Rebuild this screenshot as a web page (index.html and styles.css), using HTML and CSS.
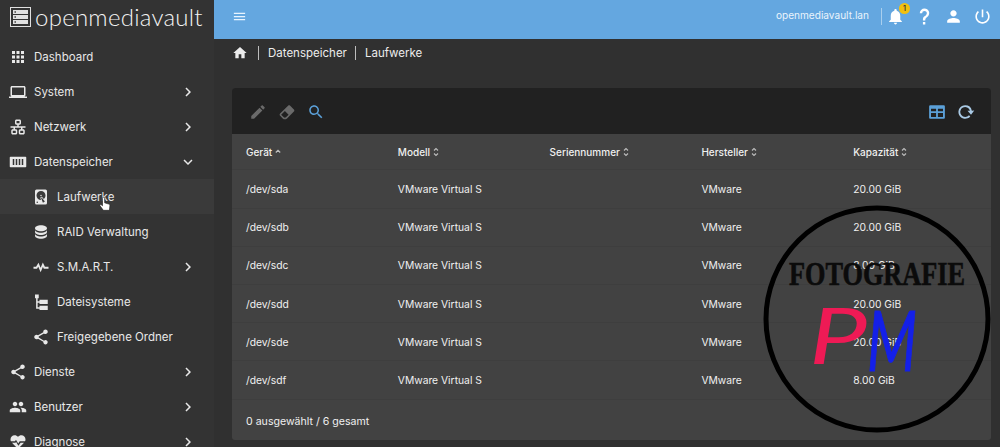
FILE: index.html
```html
<!DOCTYPE html>
<html lang="de">
<head>
<meta charset="utf-8">
<title>openmediavault</title>
<link rel="stylesheet" href="styles.css">
</head>
<body>
<svg class="defs" width="0" height="0">
  <symbol id="chev-r" viewBox="0 0 24 24"><path d="M8.6 16.6 13.2 12 8.6 7.4 10 6l6 6-6 6z"/></symbol>
  <symbol id="chev-d" viewBox="0 0 24 24"><path d="M7.4 8.6 12 13.2l4.6-4.6L18 10l-6 6-6-6z"/></symbol>
  <symbol id="apps" viewBox="0 0 24 24"><path d="M4 8h4V4H4v4zm6 12h4v-4h-4v4zm-6 0h4v-4H4v4zm0-6h4v-4H4v4zm6 0h4v-4h-4v4zm6-10v4h4V4h-4zm-6 4h4V4h-4v4zm6 6h4v-4h-4v4zm0 6h4v-4h-4v4z"/></symbol>
  <symbol id="laptop" viewBox="0 0 24 24"><path d="M20 18c1.1 0 2-.9 2-2V6c0-1.1-.9-2-2-2H4c-1.1 0-2 .9-2 2v10c0 1.1.9 2 2 2H0v2h24v-2h-4zM4 6h16v10H4V6z"/></symbol>
  <symbol id="lan" viewBox="0 0 24 24"><path d="M10,2C8.89,2 8,2.89 8,4V7C8,8.11 8.89,9 10,9H11V11H2V13H6V15H5C3.89,15 3,15.89 3,17V20C3,21.11 3.89,22 5,22H9C10.11,22 11,21.11 11,20V17C11,15.89 10.11,15 9,15H8V13H16V15H15C13.89,15 13,15.89 13,17V20C13,21.11 13.89,22 15,22H19C20.11,22 21,21.11 21,20V17C21,15.89 20.11,15 19,15H18V13H22V11H13V9H14C15.11,9 16,8.11 16,7V4C16,2.89 15.11,2 14,2H10M10,4H14V7H10V4M5,17H9V20H5V17M15,17H19V20H15V17Z"/></symbol>
  <symbol id="storage" viewBox="0 0 24 24"><path fill-rule="evenodd" d="M2 5h20a1 1 0 0 1 1 1v12a1 1 0 0 1-1 1H2a1 1 0 0 1-1-1V6a1 1 0 0 1 1-1zM5 8v8h2V8zm4 0v8h2V8zm4 0v8h2V8zm4 0v8h2V8z"/></symbol>
  <symbol id="disk" viewBox="0 0 24 24"><path d="M6,2H18A2,2 0 0,1 20,4V20A2,2 0 0,1 18,22H6A2,2 0 0,1 4,20V4A2,2 0 0,1 6,2M12,4A6,6 0 0,0 6,10C6,13.31 8.69,16 12.1,16L11.22,13.77C10.95,13.29 11.11,12.68 11.59,12.4L12.45,11.9C12.93,11.63 13.54,11.79 13.82,12.27L15.74,14.69C17.12,13.59 18,11.9 18,10A6,6 0 0,0 12,4M12,9A1,1 0 0,1 13,10A1,1 0 0,1 12,11A1,1 0 0,1 11,10A1,1 0 0,1 12,9M7,18A1,1 0 0,0 6,19A1,1 0 0,0 7,20A1,1 0 0,0 8,19A1,1 0 0,0 7,18M12.09,13.27L14.58,19.58L17.17,18.08L12.95,12.77L12.09,13.27Z"/></symbol>
  <symbol id="db" viewBox="0 0 24 24"><path d="M12 3C7.58 3 4 4.79 4 7s3.58 4 8 4 8-1.79 8-4-3.58-4-8-4M4 9v3c0 2.21 3.58 4 8 4s8-1.79 8-4V9c0 2.21-3.58 4-8 4s-8-1.79-8-4m0 5v3c0 2.21 3.58 4 8 4s8-1.79 8-4v-3c0 2.21-3.58 4-8 4s-8-1.79-8-4z"/></symbol>
  <symbol id="pulse" viewBox="0 0 24 24"><path d="M2 13h4l2.500-4 3 7 3-7 2 4h5.500" fill="none" stroke="currentColor" stroke-width="2.400"/></symbol>
  <symbol id="tree" viewBox="0 0 24 24"><path d="M4 2h5v5H7.500v4H10V9h11v5.500H10V13H7.500v6H10v-2h11v5.500H10V21H5.500V7H4z"/></symbol>
  <symbol id="share" viewBox="0 0 24 24"><path d="M18 16.08c-.76 0-1.44.3-1.96.77L8.91 12.7c.05-.23.09-.46.09-.7s-.04-.47-.09-.7l7.05-4.11c.54.5 1.25.81 2.04.81 1.66 0 3-1.34 3-3s-1.34-3-3-3-3 1.34-3 3c0 .24.04.47.09.7L8.04 9.81C7.5 9.31 6.79 9 6 9c-1.66 0-3 1.34-3 3s1.34 3 3 3c.79 0 1.5-.31 2.04-.81l7.12 4.16c-.05.21-.08.43-.08.65 0 1.61 1.31 2.92 2.92 2.92 1.61 0 2.92-1.31 2.92-2.92s-1.31-2.92-2.92-2.92z"/></symbol>
  <symbol id="people" viewBox="0 0 24 24"><path d="M16 11c1.66 0 2.99-1.34 2.99-3S17.66 5 16 5c-1.66 0-3 1.34-3 3s1.34 3 3 3zm-8 0c1.66 0 2.99-1.34 2.99-3S9.66 5 8 5C6.34 5 5 6.34 5 8s1.34 3 3 3zm0 2c-2.33 0-7 1.17-7 3.5V19h14v-2.5c0-2.33-4.67-3.5-7-3.5zm8 0c-.29 0-.62.02-.97.05 1.16.84 1.97 1.97 1.97 3.45V19h6v-2.5c0-2.33-4.67-3.5-7-3.5z"/></symbol>
  <symbol id="heart" viewBox="0 0 24 24"><path d="M7.5 3C4.4 3 2 5.4 2 8.5c0 1 .2 1.8.6 2.5H8l1.3-2 3 5 2-3h7c.5-.8.7-1.600.7-2.500C22 5.400 19.600 3 16.500 3c-1.700 0-3.400.8-4.500 2.100C10.900 3.800 9.200 3 7.500 3zM4 13c2 2.500 5 5.100 8 8 3-2.900 6-5.500 8-8h-4.500l-3 4-3-5-.9 1z"/></symbol>
  <symbol id="home" viewBox="0 0 24 24"><path d="M10 20v-6h4v6h5v-8h3L12 3 2 12h3v8z"/></symbol>
  <symbol id="bell" viewBox="0 0 24 24"><path d="M12 22c1.100 0 2-.9 2-2h-4c0 1.100.9 2 2 2zm6-6v-5c0-3.070-1.630-5.640-4.500-6.320V4c0-.83-.67-1.500-1.500-1.500s-1.500.67-1.500 1.500v.68C7.640 5.360 6 7.920 6 11v5l-2 2v1h16v-1l-2-2z"/></symbol>
  <symbol id="help" viewBox="0 0 24 24"><path d="M10,19H13V22H10V19M12,2C17.35,2.22 19.68,7.62 16.5,11.67C15.67,12.67 14.33,13.33 13.67,14.17C13,15 13,16 13,17H10C10,15.33 10,13.92 10.67,12.92C11.33,11.92 12.67,11.33 13.5,10.67C15.92,8.43 15.32,5.26 12,5A3,3 0 0,0 9,8H6A6,6 0 0,1 12,2Z"/></symbol>
  <symbol id="person" viewBox="0 0 24 24"><path d="M12 12c2.210 0 4-1.790 4-4s-1.790-4-4-4-4 1.790-4 4 1.790 4 4 4zm0 2c-2.670 0-8 1.340-8 4v2h16v-2c0-2.660-5.330-4-8-4z"/></symbol>
  <symbol id="power" viewBox="0 0 24 24"><path d="M13 3h-2v10h2V3zm4.830 2.170l-1.420 1.420C17.990 7.860 19 9.810 19 12c0 3.870-3.130 7-7 7s-7-3.130-7-7c0-2.190 1.010-4.140 2.580-5.420L6.170 5.170C4.230 6.820 3 9.260 3 12c0 4.970 4.030 9 9 9s9-4.030 9-9c0-2.740-1.230-5.180-3.170-6.830z"/></symbol>
  <symbol id="pencil" viewBox="0 0 24 24"><path d="M3 17.250V21h3.750L17.810 9.940l-3.750-3.750L3 17.250zM20.710 7.040c.39-.39.39-1.020 0-1.410l-2.340-2.340c-.39-.39-1.020-.39-1.410 0l-1.830 1.830 3.750 3.750 1.830-1.830z"/></symbol>
  <symbol id="eraser" viewBox="0 0 24 24"><path d="M16.240,3.560L21.190,8.500C21.970,9.290 21.970,10.550 21.190,11.340L12,20.530C10.440,22.090 7.910,22.090 6.340,20.530L2.810,17C2.030,16.210 2.030,14.950 2.810,14.160L13.410,3.560C14.200,2.780 15.460,2.780 16.240,3.560M4.220,15.580L7.760,19.110C8.540,19.900 9.800,19.900 10.590,19.110L14.120,15.580L9.170,10.630L4.220,15.580Z"/></symbol>
  <symbol id="search" viewBox="0 0 24 24"><path d="M15.500 14h-.79l-.28-.27C15.410 12.590 16 11.110 16 9.500 16 5.910 13.090 3 9.500 3S3 5.910 3 9.500 5.910 16 9.500 16c1.610 0 3.090-.59 4.230-1.570l.27.28v.79l5 4.990L20.490 19l-4.990-5zm-6 0C7.010 14 5 11.990 5 9.500S7.010 5 9.500 5 14 7.010 14 9.500 11.990 14 9.500 14z"/></symbol>
  <symbol id="columns" viewBox="0 0 24 24"><path fill-rule="evenodd" d="M3 3h18a1.500 1.500 0 0 1 1.500 1.500v15A1.500 1.500 0 0 1 21 21H3a1.500 1.500 0 0 1-1.500-1.500v-15A1.500 1.500 0 0 1 3 3zm1 4.500V11h6.800V7.500zm9.200 0V11H20V7.500zM4 13.200v5.300h6.800v-5.300zm9.200 0v5.300H20v-5.300z"/></symbol>
  <symbol id="refresh" viewBox="0 0 24 24"><path d="M11 3a9 9 0 0 1 8.800 7.200L23 10l-4.300 5.500L14 10.400l3.300-.2A6.600 6.600 0 1 0 16 16.200l1.700 1.700A9 9 0 1 1 11 3z"/></symbol>
  <symbol id="sort" viewBox="0 0 6 10"><path d="M1 3.500 3 1.500l2 2M1 6.500l2 2 2-2" fill="none" stroke="currentColor" stroke-width="1.100"/></symbol>
  <symbol id="sort-up" viewBox="0 0 6 10"><path d="M.8 5.500 3 3.300l2.200 2.200" fill="none" stroke="currentColor" stroke-width="1.300"/></symbol>
  <symbol id="hand" viewBox="0 0 14 18"><path d="M4 1.500a1.300 1.300 0 0 1 2.600 0V7l5 1.500c1 .3 1.400 1 1.300 2l-.6 5.500H5L1 10.500c-.6-1 .6-2 1.500-1.200L4 10.500z" fill="#fff" stroke="#222" stroke-width=".8"/></symbol>
</svg>

<div class="app">
  <aside class="sidebar">
    <div class="brand">
      <svg class="brand-mark" viewBox="0 0 21 20">
        <path fill-rule="evenodd" d="M0 0h21v20H0zM1 1v18h19V1z"/>
        <path fill-rule="evenodd" d="M3 3h15v4H3zM4.500 4.300v1.400h1.400V4.300zM3 8h15v4H3zM4.500 9.300v1.400h1.400V9.300zM3 13h15v4H3zM4.500 14.300v1.400h1.400v-1.400z"/>
      </svg>
      <span class="brand-name">openmediavault</span>
    </div>
    <nav class="nav">
      <a class="nav-item"><svg class="ico"><use href="#apps"/></svg><span class="nav-label">Dashboard</span></a>
      <a class="nav-item"><svg class="ico"><use href="#laptop"/></svg><span class="nav-label">System</span><svg class="chev"><use href="#chev-r"/></svg></a>
      <a class="nav-item"><svg class="ico"><use href="#lan"/></svg><span class="nav-label">Netzwerk</span><svg class="chev"><use href="#chev-r"/></svg></a>
      <a class="nav-item"><svg class="ico"><use href="#storage"/></svg><span class="nav-label">Datenspeicher</span><svg class="chev"><use href="#chev-d"/></svg></a>
      <a class="nav-item sub active"><svg class="ico"><use href="#disk"/></svg><span class="nav-label">Laufwerke</span><svg class="cursor"><use href="#hand"/></svg></a>
      <a class="nav-item sub"><svg class="ico"><use href="#db"/></svg><span class="nav-label">RAID Verwaltung</span></a>
      <a class="nav-item sub"><svg class="ico"><use href="#pulse"/></svg><span class="nav-label">S.M.A.R.T.</span><svg class="chev"><use href="#chev-r"/></svg></a>
      <a class="nav-item sub"><svg class="ico"><use href="#tree"/></svg><span class="nav-label">Dateisysteme</span></a>
      <a class="nav-item sub"><svg class="ico"><use href="#share"/></svg><span class="nav-label">Freigegebene Ordner</span></a>
      <a class="nav-item"><svg class="ico"><use href="#share"/></svg><span class="nav-label">Dienste</span><svg class="chev"><use href="#chev-r"/></svg></a>
      <a class="nav-item"><svg class="ico"><use href="#people"/></svg><span class="nav-label">Benutzer</span><svg class="chev"><use href="#chev-r"/></svg></a>
      <a class="nav-item"><svg class="ico"><use href="#heart"/></svg><span class="nav-label">Diagnose</span><svg class="chev"><use href="#chev-r"/></svg></a>
    </nav>
  </aside>

  <div class="main">
    <header class="topbar">
      <svg class="menu-ico" viewBox="0 0 24 24"><path d="M3 18h18v-2H3zm0-5h18v-2H3zm0-7v2h18V6z"/></svg>
      <div class="top-right">
        <span class="host">openmediavault.lan</span>
        <span class="top-sep"></span>
        <span class="bell-wrap"><svg class="top-ico"><use href="#bell"/></svg><span class="badge">1</span></span>
        <svg class="top-ico"><use href="#help"/></svg>
        <svg class="top-ico"><use href="#person"/></svg>
        <svg class="top-ico"><use href="#power"/></svg>
      </div>
    </header>

    <div class="crumbs">
      <svg class="home"><use href="#home"/></svg>
      <span class="crumb">Datenspeicher</span>
      <span class="crumb">Laufwerke</span>
    </div>

    <section class="panel">
      <div class="toolbar">
        <svg class="tool off"><use href="#pencil"/></svg>
        <svg class="tool off"><use href="#eraser"/></svg>
        <svg class="tool on"><use href="#search"/></svg>
        <span class="spacer"></span>
        <svg class="tool on"><use href="#columns"/></svg>
        <svg class="tool reload"><use href="#refresh"/></svg>
      </div>
      <div class="row head">
        <div class="cell">Gerät<svg class="sort"><use href="#sort-up"/></svg></div>
        <div class="cell">Modell<svg class="sort"><use href="#sort"/></svg></div>
        <div class="cell">Seriennummer<svg class="sort"><use href="#sort"/></svg></div>
        <div class="cell">Hersteller<svg class="sort"><use href="#sort"/></svg></div>
        <div class="cell">Kapazität<svg class="sort"><use href="#sort"/></svg></div>
      </div>
      <div class="row"><div class="cell">/dev/sda</div><div class="cell">VMware Virtual S</div><div class="cell"></div><div class="cell">VMware</div><div class="cell">20.00 GiB</div></div>
      <div class="row"><div class="cell">/dev/sdb</div><div class="cell">VMware Virtual S</div><div class="cell"></div><div class="cell">VMware</div><div class="cell">20.00 GiB</div></div>
      <div class="row"><div class="cell">/dev/sdc</div><div class="cell">VMware Virtual S</div><div class="cell"></div><div class="cell">VMware</div><div class="cell">8.00 GiB</div></div>
      <div class="row"><div class="cell">/dev/sdd</div><div class="cell">VMware Virtual S</div><div class="cell"></div><div class="cell">VMware</div><div class="cell">20.00 GiB</div></div>
      <div class="row"><div class="cell">/dev/sde</div><div class="cell">VMware Virtual S</div><div class="cell"></div><div class="cell">VMware</div><div class="cell">20.00 GiB</div></div>
      <div class="row"><div class="cell">/dev/sdf</div><div class="cell">VMware Virtual S</div><div class="cell"></div><div class="cell">VMware</div><div class="cell">8.00 GiB</div></div>
      <div class="foot">0 ausgewählt / 6 gesamt</div>
    </section>
  </div>
</div>

<svg class="watermark" viewBox="0 0 236 236">
  <circle cx="118" cy="118" r="111" fill="none" stroke="#000" stroke-width="5"/>
  <text class="wm-title" x="118" y="84" text-anchor="middle" textLength="176" lengthAdjust="spacingAndGlyphs">FOTOGRAFIE</text>
  <text class="wm-p" x="50" y="163" textLength="58" lengthAdjust="spacingAndGlyphs">P</text>
  <text class="wm-m" x="108" y="170" textLength="50" lengthAdjust="spacingAndGlyphs">M</text>
</svg>
</body>
</html>
```

FILE: styles.css
```css
* { box-sizing: border-box; }
html, body { margin: 0; height: 100%; overflow: hidden; }
body {
  position: relative;
  background: #303030;
  color: #f0f0f0;
  font-family: Inter, "Liberation Sans", sans-serif;
  font-size: 10.3px;
}
.defs { position: absolute; }
svg { fill: currentColor; display: block; flex: none; }

.app { display: flex; height: 447px; overflow: hidden; }

.sidebar { width: 214px; flex: none; background: #333333; height: 447px; overflow: hidden; }
.brand { height: 39px; display: flex; align-items: center; gap: 4px; padding: 0 0 6px 10px; }
.brand-mark { width: 21px; height: 20px; color: #e0e0e0; }
.brand-name { font-family: Lato, sans-serif; font-weight: 300; font-size: 24px; color: #f2f2f2; white-space: nowrap; letter-spacing: .25px; }

.nav-item { height: 35px; display: flex; align-items: center; padding: 0 17px 0 9px; position: relative; color: #e8e8e8; font-size: 11.5px; flex: none; }
.ico { width: 18px; height: 18px; margin-right: 7px; }
.nav-label { flex: 1; white-space: nowrap; }
.chev { width: 18px; height: 18px; }
.nav-item.sub { padding-left: 32px; }
.nav-item.active { background: #3a3a3a; }
.cursor { position: absolute; left: 99px; top: 18px; width: 12px; height: 15px; }

.main { flex: 1; min-width: 0; display: flex; flex-direction: column; }
.topbar { height: 39px; flex: none; background: #64a7e0; display: flex; align-items: center; padding: 0 8px 6px 18px; color: #fff; }
.menu-ico { width: 15px; height: 15px; color: #e8f4ff; }
.top-right { margin-left: auto; display: flex; align-items: center; gap: 10px; }
.host { font-size: 10.100px; color: #eaf4fc; margin: 0 2px 3px 0; }
.top-sep { width: 1px; height: 17px; background: #a9cfee; }
.top-ico { width: 19px; height: 19px; }
.bell-wrap { position: relative; margin-left: -6px; }
.badge { position: absolute; left: 13px; top: -4.500px; width: 11px; height: 11px; border-radius: 50%; background: #f2c00e; color: #333; font-size: 7px; line-height: 11px; text-align: center; font-weight: 600; }

.crumbs { height: 49px; flex: none; display: flex; align-items: flex-start; padding: 6px 0 0 18px; font-size: 11.500px; color: #ececec; }
.home { width: 16px; height: 16px; margin-right: 10px; }
.crumb { border-left: 1px solid #bdbdbd; padding-left: 9px; margin-right: 8px; line-height: 14px; margin-top: 1px; }

.panel { width: 759px; margin-left: 18px; height: 352px; background: #424242; border-radius: 3px; overflow: hidden; display: flex; flex-direction: column; flex: none; }
.toolbar { height: 46px; flex: none; background: #212121; display: flex; align-items: center; gap: 11px; padding: 2px 16px 0 17px; }
.spacer { flex: 1; }
.tool { width: 18px; height: 18px; }
.tool.off { color: #6a6a6a; }
.tool.on { color: #5ba0d8; }
.tool.reload { color: #a9c9e4; }

.row { display: grid; grid-template-columns: repeat(5, 1fr); height: 38.200px; align-items: center; border-bottom: 1px solid #3e3e3e; flex: none; color: #f0f0f0; }
.row.head { height: 36.400px; font-weight: 500; font-size: 10px; padding-top: 1px; }
.cell { padding-left: 14px; display: flex; align-items: center; white-space: nowrap; }
.sort { width: 6px; height: 10px; margin-left: 3px; color: #bdbdbd; }
.foot { flex: 1; display: flex; align-items: center; padding: 4px 0 0 14px; font-size: 10.600px; }

.watermark { position: absolute; left: 759px; top: 201px; width: 236px; height: 236px; overflow: visible; }
.wm-title { font-family: "Liberation Serif", serif; font-weight: 700; font-size: 33px; fill: #0b0b0b; stroke: #0b0b0b; stroke-width: .6px; }
.wm-p { font-family: Lato, sans-serif; font-style: italic; font-weight: 400; font-size: 78px; fill: #ee1a55; }
.wm-m { font-family: Lato, sans-serif; font-style: italic; font-weight: 400; font-size: 84px; fill: #1420e8; stroke: #1420e8; stroke-width: 1px; }
```
